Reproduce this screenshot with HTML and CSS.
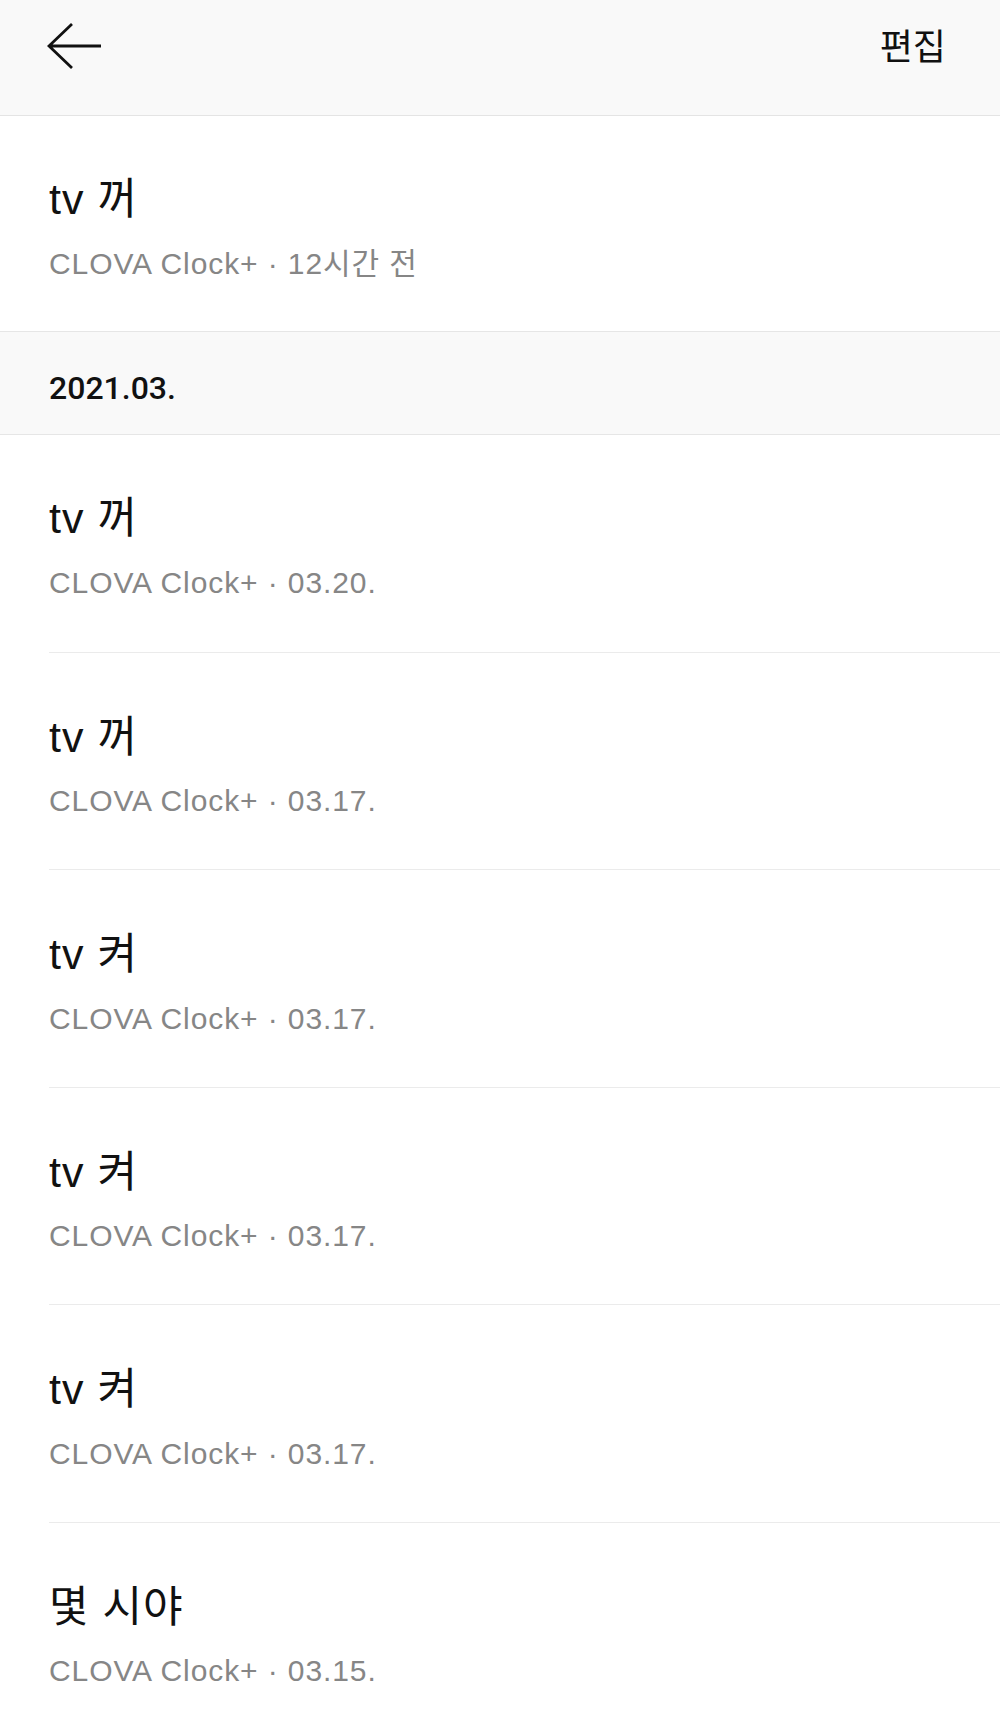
FILE: index.html
```html
<!DOCTYPE html>
<html lang="ko">
<head>
<meta charset="utf-8">
<title>기록</title>
<link rel="stylesheet" href="styles.css">
</head>
<body>
<div class="page">
  <header class="topbar">
    <button class="back" aria-label="뒤로">
      <svg width="60" height="60" viewBox="0 0 60 60" class="back-icon">
        <path d="M25 3 L2 25 L25 47 M2 25 L54 25" fill="none" stroke="#111" stroke-width="2.8" stroke-linecap="butt" stroke-linejoin="miter"/>
      </svg>
    </button>
    <span class="edit">편집</span>
  </header>

  <ul class="list">
    <li class="item">
      <div class="title">tv 꺼</div>
      <div class="sub">CLOVA Clock+ · 12시간 전</div>
    </li>
  </ul>

  <div class="section">2021.03.</div>

  <ul class="list">
    <li class="item">
      <div class="title">tv 꺼</div>
      <div class="sub">CLOVA Clock+ · 03.20.</div>
    </li>
    <li class="item sep">
      <div class="title">tv 꺼</div>
      <div class="sub">CLOVA Clock+ · 03.17.</div>
    </li>
    <li class="item sep">
      <div class="title">tv 켜</div>
      <div class="sub">CLOVA Clock+ · 03.17.</div>
    </li>
    <li class="item sep">
      <div class="title">tv 켜</div>
      <div class="sub">CLOVA Clock+ · 03.17.</div>
    </li>
    <li class="item sep">
      <div class="title">tv 켜</div>
      <div class="sub">CLOVA Clock+ · 03.17.</div>
    </li>
    <li class="item sep">
      <div class="title">몇 시야</div>
      <div class="sub">CLOVA Clock+ · 03.15.</div>
    </li>
  </ul>
</div>
</body>
</html>
```

FILE: styles.css
```css
* { box-sizing: border-box; }
html, body {
  margin: 0;
  padding: 0;
  background: #fff;
}
body {
  font-family: "Liberation Sans", "Noto Sans CJK KR", sans-serif;
  color: #111;
}
.page {
  width: 1000px;
  height: 1723px;
  overflow: hidden;
}
.topbar {
  height: 116px;
  background: #f9f9f9;
  border-bottom: 1px solid #e4e4e4;
  display: flex;
  align-items: flex-start;
  justify-content: space-between;
  padding: 0 54px 0 0;
}
.back {
  border: 0;
  background: transparent;
  padding: 0;
  margin: 21px 0 0 47px;
  width: 60px;
  height: 60px;
  display: block;
}
.back-icon { display: block; }
.edit {
  font-family: "Noto Sans CJK KR", sans-serif;
  font-size: 36px;
  line-height: 36px;
  margin-top: 26px;
  color: #111;
}
.list {
  list-style: none;
  margin: 0;
  padding: 0 0 0 49px;
}
.item {
  height: 216.5px;
  padding-top: 62px;
  display: flex;
  flex-direction: column;
}
.list:first-of-type .item { height: 215px; }
.item.sep { border-top: 1px solid #ebebeb; height: 217.5px; padding-top: 63px; }
.title {
  font-size: 43px;
  line-height: 43px;
  letter-spacing: 1px;
  color: #111;
}
.sub {
  margin-top: 27.5px;
  font-size: 30px;
  line-height: 30px;
  letter-spacing: 0.9px;
  color: #868686;
}
.section {
  height: 104px;
  background: #f9f9f9;
  border-top: 1px solid #e6e6e6;
  border-bottom: 1px solid #e6e6e6;
  padding: 40px 0 0 49px;
  font-family: "Roboto", "Liberation Sans", sans-serif;
  font-weight: 500;
  font-size: 32px;
  line-height: 32px;
  color: #111;
}
```
